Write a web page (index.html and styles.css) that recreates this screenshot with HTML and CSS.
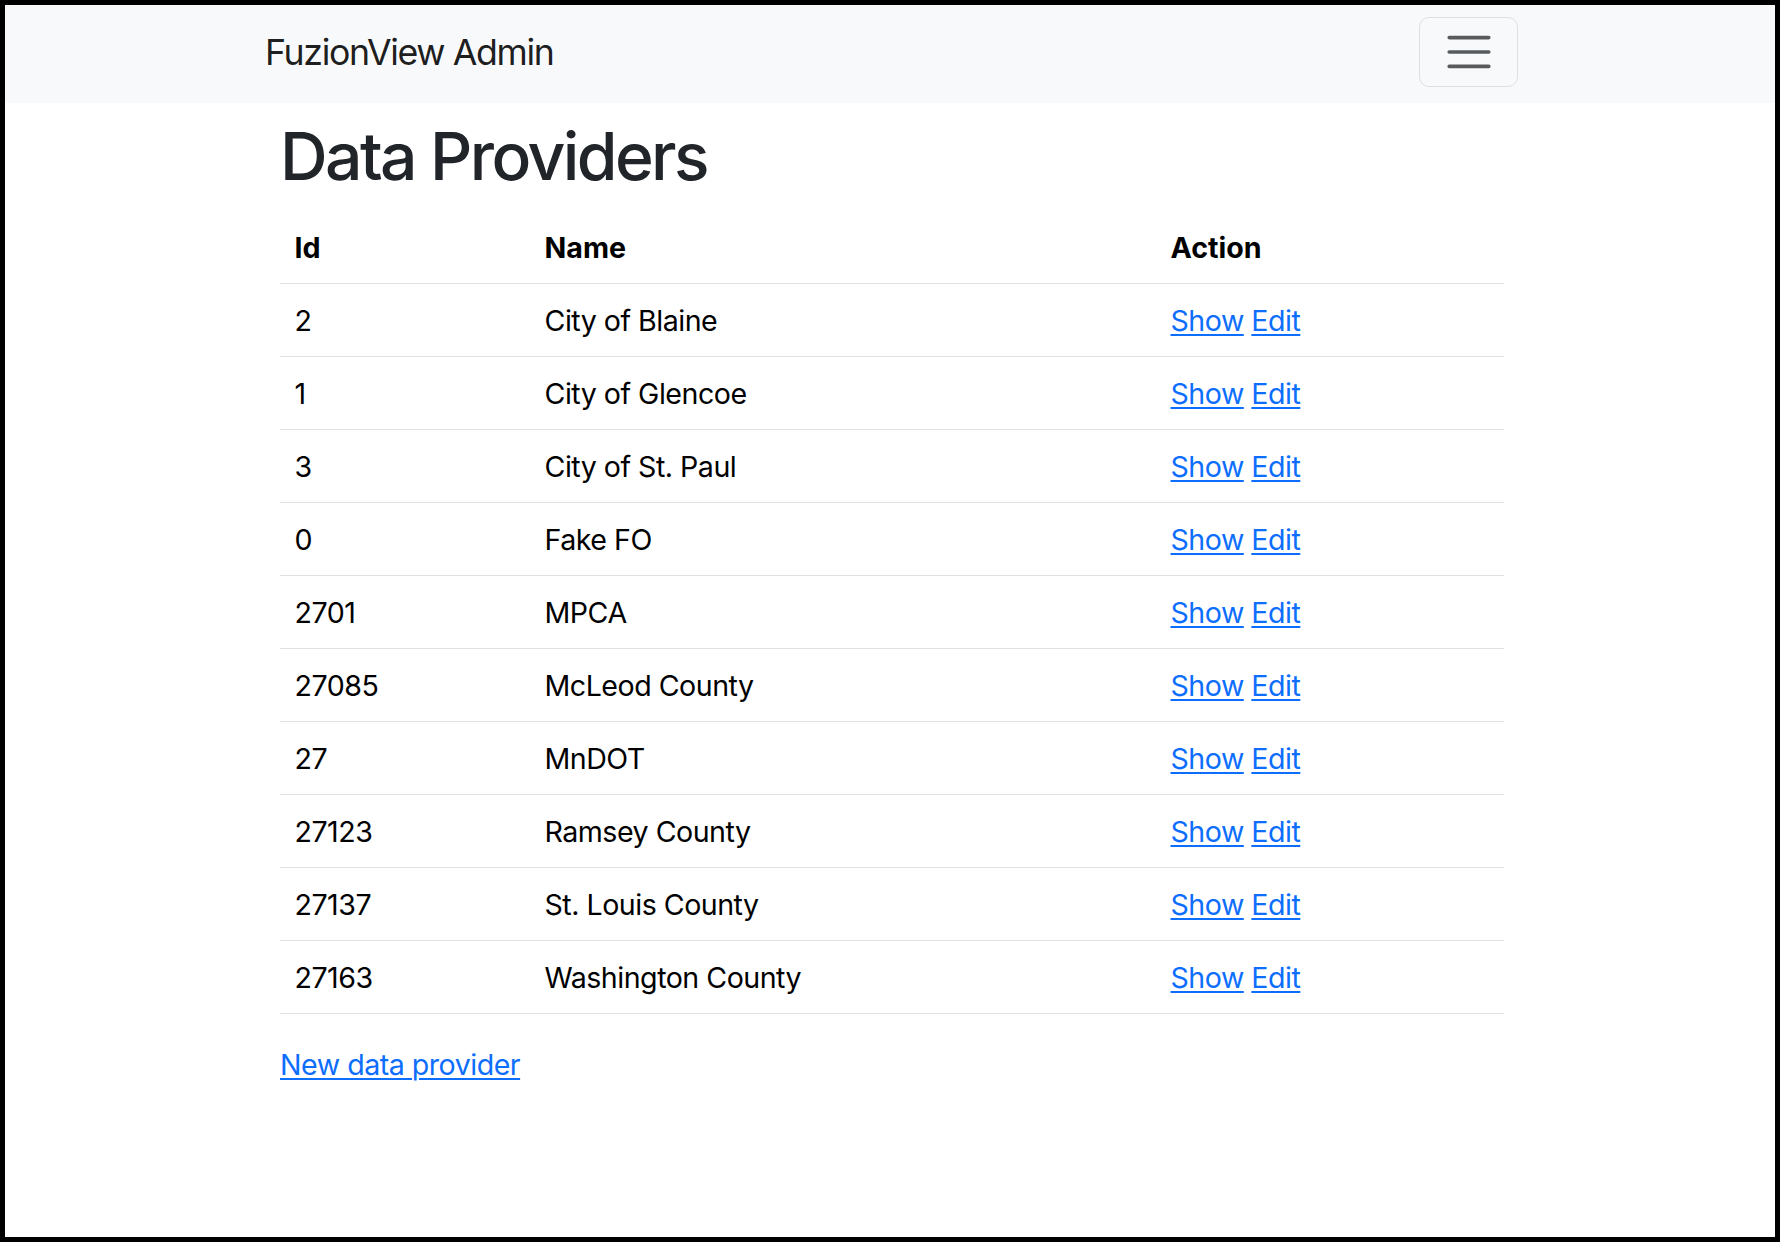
FILE: index.html
```html
<!DOCTYPE html>
<html lang="en">
<head>
<meta charset="utf-8">
<title>FuzionView Admin</title>
<link rel="stylesheet" href="styles.css">
</head>
<body>
<div class="frame">
  <nav class="navbar">
    <div class="nav-inner">
      <a class="brand" href="#">FuzionView Admin</a>
      <button class="toggler" type="button" aria-label="Toggle navigation">
        <svg class="toggler-icon" viewBox="0 0 30 30" width="54" height="54">
          <path d="M4 7h22M4 15h22M4 23h22" stroke="rgba(33,37,41,0.75)" stroke-width="2" stroke-linecap="round" stroke-miterlimit="10" fill="none"/>
        </svg>
      </button>
    </div>
  </nav>
  <main class="content">
    <h1 class="title">Data Providers</h1>
    <table class="table">
      <thead>
        <tr><th class="col-id">Id</th><th class="col-name">Name</th><th class="col-action">Action</th></tr>
      </thead>
      <tbody>
        <tr><td>2</td><td>City of Blaine</td><td><a href="#">Show</a> <a href="#">Edit</a></td></tr>
        <tr><td>1</td><td>City of Glencoe</td><td><a href="#">Show</a> <a href="#">Edit</a></td></tr>
        <tr><td>3</td><td>City of St. Paul</td><td><a href="#">Show</a> <a href="#">Edit</a></td></tr>
        <tr><td>0</td><td>Fake FO</td><td><a href="#">Show</a> <a href="#">Edit</a></td></tr>
        <tr><td>2701</td><td>MPCA</td><td><a href="#">Show</a> <a href="#">Edit</a></td></tr>
        <tr><td>27085</td><td>McLeod County</td><td><a href="#">Show</a> <a href="#">Edit</a></td></tr>
        <tr><td>27</td><td>MnDOT</td><td><a href="#">Show</a> <a href="#">Edit</a></td></tr>
        <tr><td>27123</td><td>Ramsey County</td><td><a href="#">Show</a> <a href="#">Edit</a></td></tr>
        <tr><td>27137</td><td>St. Louis County</td><td><a href="#">Show</a> <a href="#">Edit</a></td></tr>
        <tr><td>27163</td><td>Washington County</td><td><a href="#">Show</a> <a href="#">Edit</a></td></tr>
      </tbody>
    </table>
    <a class="new-link" href="#">New data provider</a>
  </main>
</div>
</body>
</html>
```

FILE: styles.css
```css
html, body {
  margin: 0;
  padding: 0;
}

body {
  background: #000;
  font-family: Inter, "Noto Sans", sans-serif;
  font-size: 28.6px;
  line-height: 43px;
  color: #212529;
  letter-spacing: -0.5px;
}

.frame {
  margin: 5px;
  height: 1232px;
  background: #fff;
  overflow: hidden;
}

.navbar {
  background: #f8f9fa;
  padding: 12px 0 16px 3px;
}

.nav-inner {
  width: 1253px;
  margin: 0 auto;
  display: flex;
  align-items: center;
  justify-content: space-between;
}

.brand {
  font-size: 35.7px;
  line-height: 1.5;
  letter-spacing: -1.35px;
  padding-top: 1px;
  color: rgba(0, 0, 0, 0.9);
  text-decoration: none;
}

.toggler {
  width: 99px;
  height: 70px;
  padding: 0;
  border: 1px solid rgba(0, 0, 0, 0.1);
  border-radius: 10px;
  background: transparent;
  display: flex;
  align-items: center;
  justify-content: center;
}

.toggler-icon {
  display: block;
}

.content {
  width: 1224px;
  margin: 0 auto;
  padding: 14px 0 0 4px;
}

.title {
  margin: 0 0 15px;
  font-size: 66px;
  font-weight: 500;
  line-height: 1.2;
  letter-spacing: -2.6px;
  color: #212529;
}

.table {
  width: 100%;
  border-collapse: collapse;
  margin-bottom: 29px;
  color: #000;
}

.table th,
.table td {
  padding: 14.5px 14.5px;
  border-bottom: 1px solid #dee2e6;
  text-align: left;
  vertical-align: top;
}

.table th {
  font-weight: 700;
  letter-spacing: 0;
}

.col-id { width: 221px; }
.col-name { width: 597px; }

a {
  color: #0d6efd;
  text-decoration: underline;
  text-decoration-thickness: 2px;
  text-underline-offset: 3px;
}
```
